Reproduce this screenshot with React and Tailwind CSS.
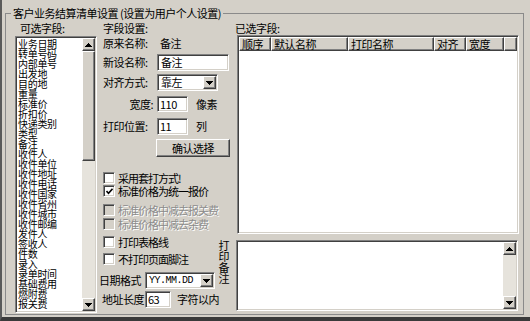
import React from 'react';

const sunken =
  'border border-t-[#808080] border-l-[#808080] border-b-white border-r-white shadow-[inset_1px_1px_0_#404040,inset_-1px_-1px_0_#d4d0c8]';
const raised =
  'border border-t-white border-l-white border-b-[#404040] border-r-[#404040] shadow-[inset_-1px_-1px_0_#808080]';

const fields = [
  '业务日期', '转单号码', '内部单号', '出发地', '目的地', '重量', '标准价', '折扣价', '快递类别',
  '类型', '备注', '收件人', '收件单位', '收件地址', '收件电话', '收件国家', '收件省州', '收件城市',
  '收件邮编', '发件人', '签收人', '件数', '录入', '录单时间', '基础费用', '燃附费', '报关费',
];

const columns = [
  { name: '顺序', w: 'w-[32px]' },
  { name: '默认名称', w: 'w-[77px]' },
  { name: '打印名称', w: 'w-[86px]' },
  { name: '对齐', w: 'w-[32px]' },
  { name: '宽度', w: 'w-[38px]' },
];

const Arrow = ({ up }) => (
  <svg width="7" height="4" viewBox="0 0 7 4" shapeRendering="crispEdges">
    <path d={up ? 'M3.5 0L7 4H0z' : 'M0 0h7L3.5 4z'} fill="#000" />
  </svg>
);

const ArrowBtn = ({ up, className = '' }) => (
  <div className={`${raised} flex items-center justify-center bg-[#d4d0c8] ${className}`}>
    <Arrow up={up} />
  </div>
);

const Check = ({ label, checked, disabled, className = '' }) => (
  <div className={`flex h-[12px] items-center pl-[5px] ${className}`}>
    <div className={`${sunken} flex h-[12px] w-[12px] items-center justify-center ${disabled ? 'bg-[#d4d0c8]' : 'bg-white'}`}>
      {checked && (
        <svg width="7" height="7" viewBox="0 0 7 7">
          <path d="M0.5 3l2 2.2L6.5 0.8" stroke="#000" strokeWidth="1.6" fill="none" />
        </svg>
      )}
    </div>
    <span
      className={`ml-[3px] leading-[12px] tracking-[-1px] ${disabled ? 'text-[#8c8c8c] [text-shadow:1px_1px_0_#fff]' : ''}`}
    >
      {label}
    </span>
  </div>
);

export default function App() {
  return (
    <div className="h-[321px] w-[530px] overflow-hidden border-b-[4px] border-l-[2px] border-b-[#3a3a3a] border-l-[#5a5a5a] bg-[#d4d0c8] pl-[3px] pt-[7px] font-['Noto_Sans_CJK_SC',sans-serif] text-[11px] text-black">
      <fieldset className="h-[308px] w-[519px] border border-[#8a8a8a]">
        <legend className="ml-[5px] px-[2px] leading-[12px] tracking-[-0.5px]">
          客户业务结算清单设置 (设置为用户个人设置)
        </legend>
        <div className="flex">
          {/* available fields */}
          <div className="ml-[9px] w-[82px] shrink-0">
            <div className="ml-[5px] mt-[3px] h-[12px] leading-[12px] tracking-[-0.5px]">可选字段:</div>
            <div className={`${sunken} mt-[2px] flex h-[277px] bg-white p-[1px]`}>
              <div className="flex-1 pl-[1px] pt-[1px] text-[10px] leading-[10px] tracking-[-0.3px]">
                {fields.map((f) => (
                  <div key={f} className="h-[10px]">{f}</div>
                ))}
              </div>
              <div className="flex w-[13px] flex-col">
                <ArrowBtn up className="h-[13px]" />
                <div className={`${raised} h-[110px] bg-[#d4d0c8]`} />
                <div className="flex-1 bg-[#e6e3dc]" />
                <ArrowBtn className="h-[13px]" />
              </div>
            </div>
          </div>

          {/* field settings */}
          <div className="ml-[1px] w-[135px] shrink-0 tracking-[-0.5px]">
            <div className="mt-[3px] h-[12px] pl-[5px] leading-[12px]">字段设置:</div>
            <div className="mt-[1px] flex h-[16px] items-center pl-[5px]">
              <span className="w-[54px]">原来名称:</span>
              <div className="flex h-[16px] w-[72px] items-center pl-[3px]">备注</div>
            </div>
            <div className="mt-[3px] flex h-[17px] items-center pl-[5px]">
              <span className="w-[54px]">新设名称:</span>
              <div className={`${sunken} flex h-[17px] w-[72px] items-center bg-white pl-[3px]`}>备注</div>
            </div>
            <div className="mt-[3px] flex h-[17px] items-center pl-[5px]">
              <span className="w-[54px]">对齐方式:</span>
              <div className={`${sunken} flex h-[17px] w-[61px] items-center bg-white p-[1px]`}>
                <span className="flex-1 pl-[2px]">靠左</span>
                <ArrowBtn className="h-[13px] w-[13px]" />
              </div>
            </div>
            <div className="mt-[5px] flex h-[16px] items-center pl-[5px]">
              <span className="w-[54px] pr-[4px] text-right">宽度:</span>
              <div className={`${sunken} flex h-[16px] w-[31px] items-center bg-white pl-[2px]`}>110</div>
              <span className="ml-[8px]">像素</span>
            </div>
            <div className="mt-[6px] flex h-[17px] items-center pl-[5px]">
              <span className="w-[54px]">打印位置:</span>
              <div className={`${sunken} flex h-[17px] w-[31px] items-center bg-white pl-[2px]`}>11</div>
              <span className="ml-[8px]">列</span>
            </div>
            <div className={`${raised} ml-[58px] mt-[4px] flex h-[18px] w-[74px] items-center justify-center`}>
              确认选择
            </div>

            <Check className="mt-[15px]" label="采用套打方式!" />
            <Check className="mt-[1px]" label="标准价格为统一报价" checked />
            <Check className="mt-[7px]" label="标准价格中减去报关费" disabled />
            <Check className="mt-[2px]" label="标准价格中减去杂费" disabled />
            <Check className="mt-[6px]" label="打印表格线" />
            <Check className="mt-[5px]" label="不打印页面脚注" />

            <div className="mt-[7px] flex h-[17px] items-center pl-[1px]">
              <span className="w-[46px]">日期格式</span>
              <div className={`${sunken} flex h-[17px] w-[70px] items-center bg-white p-[1px]`}>
                <span className="flex-1 pl-[2px] font-['Liberation_Mono',monospace] text-[10px] tracking-[-0.5px]">YY.MM.DD</span>
                <ArrowBtn className="h-[13px] w-[13px]" />
              </div>
            </div>
            <div className="mt-[2px] flex h-[17px] items-center pl-[4px]">
              <span className="w-[43px]">地址长度</span>
              <div className={`${sunken} flex h-[17px] w-[26px] items-center bg-white pl-[2px]`}>63</div>
              <span className="ml-[6px]">字符以内</span>
            </div>
          </div>

          {/* selected fields */}
          <div className="flex-1">
            <div className="ml-[2px] mt-[3px] h-[12px] leading-[12px] tracking-[-0.5px]">已选字段:</div>
            <div className={`${sunken} ml-[4px] mt-[1px] h-[199px] w-[282px] bg-white p-[1px]`}>
              <div className="flex h-[14px] bg-[#d4d0c8]">
                {columns.map((c) => (
                  <div
                    key={c.name}
                    className={`${raised} ${c.w} flex h-[14px] shrink-0 items-center overflow-hidden pl-[2px] leading-[12px] tracking-[-0.5px]`}
                  >
                    {c.name}
                  </div>
                ))}
                <div className={`${raised} h-[14px] flex-1`} />
              </div>
            </div>
            <div className="mt-[6px] flex">
              <div className="-ml-[15px] flex w-[12px] flex-col items-center leading-[11px]">
                <span>打</span>
                <span>印</span>
                <span>备</span>
                <span>注</span>
              </div>
              <div className={`${sunken} ml-[6px] flex h-[71px] w-[282px] bg-white p-[1px]`}>
                <div className="flex-1" />
                <div className="flex w-[13px] flex-col">
                  <ArrowBtn up className="h-[13px]" />
                  <div className="flex-1 bg-[#e6e3dc]" />
                  <ArrowBtn className="h-[13px]" />
                </div>
              </div>
            </div>
          </div>
        </div>
      </fieldset>
    </div>
  );
}
